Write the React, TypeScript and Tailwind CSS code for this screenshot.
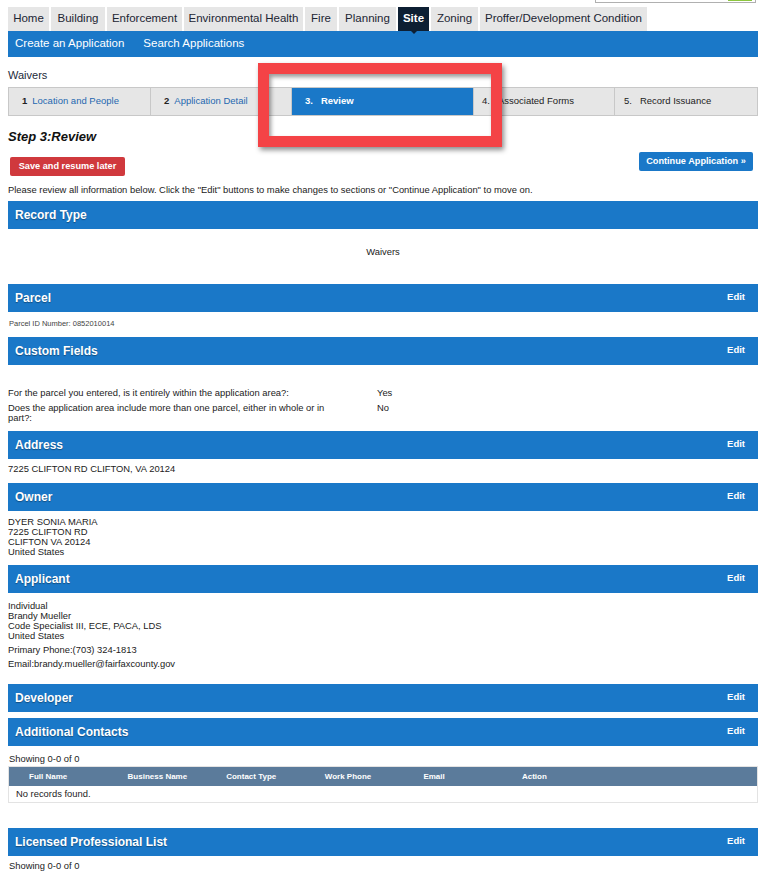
import React from 'react';

const tabs = [
  { label: 'Home', w: 'w-[41px]' },
  { label: 'Building', w: 'w-[54px]' },
  { label: 'Enforcement', w: 'w-[75px]' },
  { label: 'Environmental Health', w: 'w-[119px]' },
  { label: 'Fire', w: 'w-[32px]' },
  { label: 'Planning', w: 'w-[57px]' },
  { label: 'Site', w: 'w-[31px]', active: true },
  { label: 'Zoning', w: 'w-[47px]' },
  { label: 'Proffer/Development Condition', w: 'w-[167px]' },
];

const columns = ['Full Name', 'Business Name', 'Contact Type', 'Work Phone', 'Email', 'Action'];

function SectionHeader({ title, edit = true, className = '' }: { title: string; edit?: boolean; className?: string }) {
  return (
    <div className={`flex h-[28px] items-center justify-between bg-[#1a78c8] pl-[7px] pr-[13px] ${className}`}>
      <span className="text-[12px] font-bold text-white [text-shadow:0_1px_1px_rgba(0,0,0,0.35)]">{title}</span>
      {edit && <span className="-mt-[2px] text-[9.5px] font-bold text-white">Edit</span>}
    </div>
  );
}

export default function App() {
  return (
    <div className="relative min-h-[871px] bg-white font-['Liberation_Sans',Arial,sans-serif] text-[#222]">
      <div className="ml-[8px] w-[750px]">
        {/* search box (cut off at top) */}
        <div className="flex h-[7px] justify-end">
          <div className="relative mr-[2px] h-[3px] w-[161px] border-x border-b border-[#b0b0b0]">
            <div className="absolute right-[3px] top-0 h-[1px] w-[24px] bg-[#8cc63e]" />
          </div>
        </div>

        {/* TABS */}
        <div className="flex h-[24px] gap-[2px]">
          {tabs.map(t => (
            <div
              key={t.label}
              className={`relative flex items-center justify-center text-[11.5px] ${t.w} ${
                t.active ? 'bg-[#0d1f33] font-bold text-white' : 'bg-[#e6e6e6] text-[#1c2533]'
              }`}
            >
              {t.label}
              {t.active && (
                <span className="absolute -bottom-[3px] left-1/2 h-0 w-0 -translate-x-1/2 border-x-[3px] border-t-[3px] border-x-transparent border-t-[#0d1f33]" />
              )}
            </div>
          ))}
        </div>

        {/* SUB NAV */}
        <div className="flex h-[26px] items-center gap-[19px] bg-[#1a78c8] pl-[7px] text-[11.5px] text-white">
          <span>Create an Application</span>
          <span>Search Applications</span>
        </div>

        <div className="mt-[11px] text-[11px] leading-[14px] text-[#1d2a3a]">Waivers</div>

        {/* STEPS */}
        <div className="mt-[5px] flex h-[29px] border border-[#c8c8c8] bg-[#e6e6e6] text-[9.5px]">
          <div className="flex w-[142px] items-center border-r border-[#c8c8c8] pl-[13px]">
            <span className="font-bold text-[#222]">1</span>
            <span className="ml-[5px] text-[#2568b0]">Location and People</span>
          </div>
          <div className="flex w-[141px] items-center border-r border-[#c8c8c8] pl-[13px]">
            <span className="font-bold text-[#222]">2</span>
            <span className="ml-[5px] text-[#2568b0]">Application Detail</span>
          </div>
          <div className="flex w-[182px] items-center border-r border-[#c8c8c8] bg-[#1a78c8] pl-[13px] font-bold text-white">
            <span>3.</span>
            <span className="ml-[8px]">Review</span>
          </div>
          <div className="flex w-[141px] items-center border-r border-[#c8c8c8] pl-[8px]">
            <span>4.</span>
            <span className="ml-[8px]">Associated Forms</span>
          </div>
          <div className="flex flex-1 items-center pl-[9px]">
            <span>5.</span>
            <span className="ml-[8px]">Record Issuance</span>
          </div>
        </div>

        <div className="mt-[13px] text-[13px] font-bold italic leading-[16px] text-[#111]">Step 3:Review</div>

        <div className="mt-[7px] flex items-start justify-between">
          <button className="ml-[2px] mt-[5px] h-[19px] w-[115px] rounded-[2px] bg-[#d0393d] text-[9.2px] font-bold text-white">
            Save and resume later
          </button>
          <button className="mr-[5px] h-[19px] w-[114px] rounded-[2px] bg-[#1a78c8] text-[9.2px] font-bold text-white">
            Continue Application »
          </button>
        </div>

        <div className="mt-[8px] text-[9.4px] leading-[12px]">
          Please review all information below. Click the "Edit" buttons to make changes to sections or "Continue Application" to move on.
        </div>

        <SectionHeader title="Record Type" edit={false} className="mt-[5px]" />
        <div className="pb-[26px] pt-[17px] text-center text-[9.4px] leading-[12px]">Waivers</div>

        <SectionHeader title="Parcel" />
        <div className="mt-[6px] pl-[1px] text-[7.5px] leading-[12px] text-[#444]">Parcel ID Number: 0852010014</div>

        <SectionHeader title="Custom Fields" className="mt-[7px]" />
        <div className="mt-[23px] flex flex-col gap-[5px] text-[9.4px] leading-[10px]">
          <div className="flex">
            <div className="w-[330px]">For the parcel you entered, is it entirely within the application area?:</div>
            <div className="ml-[39px]">Yes</div>
          </div>
          <div className="flex">
            <div className="w-[330px]">Does the application area include more than one parcel, either in whole or in part?:</div>
            <div className="ml-[39px]">No</div>
          </div>
        </div>

        <SectionHeader title="Address" className="mt-[8px]" />
        <div className="mt-[5px] text-[9.4px] leading-[10px]">7225 CLIFTON RD CLIFTON, VA 20124</div>

        <SectionHeader title="Owner" className="mt-[9px]" />
        <div className="mt-[6px] text-[9.4px] leading-[10px]">
          <div>DYER SONIA MARIA</div>
          <div>7225 CLIFTON RD</div>
          <div>CLIFTON VA 20124</div>
          <div>United States</div>
        </div>

        <SectionHeader title="Applicant" className="mt-[8px]" />
        <div className="mt-[8px] text-[9.4px] leading-[10px]">
          <div>Individual</div>
          <div>Brandy Mueller</div>
          <div>Code Specialist III, ECE, PACA, LDS</div>
          <div>United States</div>
          <div className="mt-[4px]">Primary Phone:(703) 324-1813</div>
          <div className="mt-[4px]">Email:brandy.mueller@fairfaxcounty.gov</div>
        </div>

        <SectionHeader title="Developer" className="mt-[15px]" />
        <SectionHeader title="Additional Contacts" className="mt-[6px]" />
        <div className="mt-[8px] pl-[1px] text-[9.4px] leading-[10px]">Showing 0-0 of 0</div>
        <div className="mt-[2px] border border-[#e3e3e3]">
          <div className="flex h-[19px] items-center bg-[#5b7b9b] text-[8px] font-bold text-white">
            {columns.map(c => (
              <div key={c} className="w-[98.6px] pl-[20px]">{c}</div>
            ))}
          </div>
          <div className="flex h-[16px] items-center pl-[7px] text-[9.4px]">No records found.</div>
        </div>

        <SectionHeader title="Licensed Professional List" className="mt-[25px]" />
        <div className="mt-[5px] pl-[1px] text-[9.4px] leading-[10px]">Showing 0-0 of 0</div>
      </div>

      {/* annotation box */}
      <div className="absolute left-[258px] top-[63px] h-[84px] w-[244px] border-[11px] border-[#f44346] shadow-[2px_3px_5px_rgba(0,0,0,0.45),inset_2px_3px_4px_rgba(0,0,0,0.4)]" />
    </div>
  );
}
